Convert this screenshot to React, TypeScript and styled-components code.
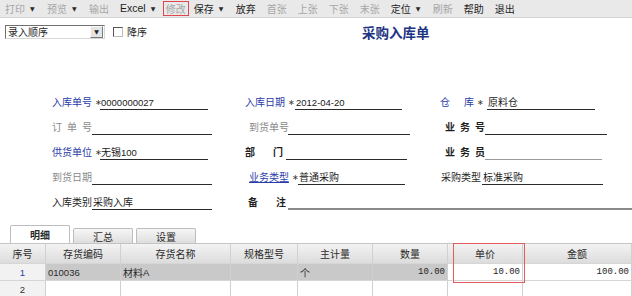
import styled, { createGlobalStyle } from "styled-components"

type Tone = "blue" | "gray" | "dark" | "link"

const toneColor: Record<Tone, string> = {
  blue: "#2a3ca8",
  link: "#2a3ca8",
  gray: "#8a8a8a",
  dark: "#1f1f1f",
}

const GlobalStyle = createGlobalStyle`
  html, body {
    margin: 0;
    padding: 0;
    background: #fff;
  }
  body {
    width: 632px;
    height: 296px;
    overflow: hidden;
    font-family: "Noto Sans CJK SC", "Liberation Sans", sans-serif;
    font-size: 10px;
    color: #1f1f1f;
  }
`

const Toolbar = styled.div`
  display: flex;
  align-items: center;
  height: 17px;
  background: #e9e9e9;
  border-bottom: 1px solid #d4d4d4;
`

const ToolButton = styled.div<{ $disabled?: boolean; $marked?: boolean }>`
  display: flex;
  align-items: center;
  height: 15px;
  box-sizing: border-box;
  padding: 0 ${(p) => (p.$marked ? 2 : 4)}px;
  margin-right: ${(p) => (p.$marked ? 0 : 1)}px;
  line-height: 13px;
  white-space: nowrap;
  color: ${(p) => (p.$disabled ? "#a6a6a6" : "#1e1e1e")};
  border: 1px solid ${(p) => (p.$marked ? "#e0474c" : "transparent")};
`

const Latin = styled.span`
  font-family: "Liberation Sans", sans-serif;
  font-size: 10.5px;
`

const Caret = styled.span`
  display: inline-block;
  width: 6px;
  margin-left: 5px;
  font-family: "DejaVu Sans", sans-serif;
  font-size: 6px;
  color: #2a2a2a;
`

const TopRow = styled.div`
  display: flex;
  align-items: center;
  height: 16px;
  margin: 6px 0 0 5px;
`

const Combo = styled.div`
  display: flex;
  align-items: center;
  width: 100px;
  height: 14px;
  box-sizing: border-box;
  padding-left: 2px;
  background: #fff;
  border: 1px solid;
  border-color: #707070 #d8d8d8 #d8d8d8 #707070;
  line-height: 12px;
`

const ComboButton = styled.span`
  display: flex;
  align-items: center;
  justify-content: center;
  width: 11px;
  height: 10px;
  margin-left: auto;
  margin-right: 1px;
  background: #e4e4e4;
  border: 1px solid;
  border-color: #fafafa #7a7a7a #7a7a7a #fafafa;
  font-family: "DejaVu Sans", sans-serif;
  font-size: 6px;
  color: #222;
`

const CheckBox = styled.span`
  width: 8px;
  height: 8px;
  margin-left: 8px;
  border: 1px solid #555;
  border-right-color: #bbb;
  border-bottom-color: #bbb;
  background: #fff;
`

const CheckLabel = styled.span`
  margin-left: 4px;
  line-height: 14px;
`

const Title = styled.div`
  margin-left: 215px;
  font-size: 13.5px;
  font-weight: bold;
  color: #1d3582;
  line-height: 16px;
`

const Form = styled.div`
  display: flex;
  flex-direction: column;
  margin-top: 45px;
`

const FormRow = styled.div`
  display: grid;
  grid-template-columns: 193px 195px 1fr;
  height: 25px;
  padding-left: 52px;
`

const Field = styled.div<{ $indent: number; $span?: boolean }>`
  display: flex;
  align-items: flex-end;
  margin-left: ${(p) => p.$indent}px;
  grid-column: ${(p) => (p.$span ? "span 2" : "auto")};
`

const LabelBox = styled.div<{ $width: number }>`
  display: flex;
  align-items: center;
  flex: none;
  width: ${(p) => p.$width}px;
  height: 14px;
  margin-bottom: 1px;
`

const LabelText = styled.span<{ $tone: Tone; $bold?: boolean; $width: number }>`
  display: flex;
  justify-content: space-between;
  width: ${(p) => p.$width}px;
  line-height: 14px;
  white-space: nowrap;
  color: ${(p) => toneColor[p.$tone]};
  font-weight: ${(p) => (p.$bold ? "bold" : "normal")};
  text-decoration: ${(p) => (p.$tone === "link" ? "underline" : "none")};
  text-underline-offset: 1px;
`

const Star = styled.span`
  margin-left: 3px;
  font-family: "DejaVu Sans", sans-serif;
  font-size: 8px;
  color: #333;
`

const Line = styled.div<{ $width?: number; $light?: boolean; $thick?: boolean }>`
  flex: ${(p) => (p.$width ? "none" : "1")};
  width: ${(p) => (p.$width ? `${p.$width}px` : "auto")};
  height: 15px;
  box-sizing: border-box;
  padding-left: 1px;
  line-height: 14px;
  white-space: nowrap;
  color: #1a1a1a;
  border-bottom: ${(p) => (p.$thick ? 2 : 1)}px solid
    ${(p) => (p.$light ? "#9a9a9a" : p.$thick ? "#8a8a8a" : "#2a2a2a")};
`

const Digits = styled.span`
  font-family: "Liberation Sans", sans-serif;
  font-size: 9.5px;
`

const Tabs = styled.div`
  display: flex;
  align-items: flex-end;
  gap: 3px;
  height: 18px;
  margin-top: 15px;
  padding-left: 10px;
`

const Tab = styled.div<{ $active?: boolean }>`
  display: flex;
  align-items: center;
  justify-content: center;
  width: 60px;
  height: ${(p) => (p.$active ? 18 : 15)}px;
  box-sizing: border-box;
  border: 1px solid #bdbdbd;
  border-bottom: none;
  border-radius: 2px 2px 0 0;
  background: ${(p) =>
    p.$active ? "#ffffff" : "linear-gradient(#f6f6f6, #dedede)"};
  font-weight: ${(p) => (p.$active ? "bold" : "normal")};
  color: #2a2a2a;
`

const Grid = styled.div`
  position: relative;
  border-top: 1px solid #c4c4c4;
`

const GridRow = styled.div<{ $height: number }>`
  display: grid;
  grid-template-columns: 46px 75px 110px 67px 75px 75px 75px 1fr;
  height: ${(p) => p.$height}px;
  border-bottom: 1px solid #d6d6d6;
`

type Shade = "head" | "index" | "gray" | "white"

const shadeBg: Record<Shade, string> = {
  head: "linear-gradient(#f3f3f3, #dcdcdc)",
  index: "#f2f2f2",
  gray: "#c9c9c9",
  white: "#ffffff",
}

const Cell = styled.div<{ $shade: Shade; $align?: "left" | "center" | "right" }>`
  display: flex;
  align-items: center;
  justify-content: ${(p) =>
    p.$align === "right" ? "flex-end" : p.$align === "center" ? "center" : "flex-start"};
  padding: 0 2px;
  background: ${(p) => shadeBg[p.$shade]};
  border-right: 1px solid #d0d0d0;
  white-space: nowrap;
  overflow: hidden;
  color: #2a2a2a;
`

const RowNo = styled.span<{ $blue?: boolean }>`
  font-family: "Liberation Sans", sans-serif;
  font-size: 9.5px;
  color: ${(p) => (p.$blue ? "#2a3ca8" : "#333")};
`

const Amount = styled.span`
  font-family: "Liberation Mono", monospace;
  font-size: 9px;
  color: #222;
`

const Mark = styled.div`
  position: absolute;
  left: 453px;
  top: -1px;
  width: 72px;
  height: 40px;
  box-sizing: border-box;
  border: 1.5px solid #e05a5e;
  pointer-events: none;
`

type Tool = { text: string; disabled?: boolean; caret?: boolean; marked?: boolean; latin?: boolean }

const tools: Tool[] = [
  { text: "打印", disabled: true, caret: true },
  { text: "预览", disabled: true, caret: true },
  { text: "输出", disabled: true },
  { text: "Excel", caret: true, latin: true },
  { text: "修改", disabled: true, marked: true },
  { text: "保存", caret: true },
  { text: "放弃" },
  { text: "首张", disabled: true },
  { text: "上张", disabled: true },
  { text: "下张", disabled: true },
  { text: "末张", disabled: true },
  { text: "定位", caret: true },
  { text: "刷新", disabled: true },
  { text: "帮助" },
  { text: "退出" },
]

type FieldDef = {
  label: string
  tone: Tone
  bold?: boolean
  required?: boolean
  value?: string
  indent?: number
  textW?: number
  labelW: number
  lineW?: number
  light?: boolean
  wide?: boolean
}

const rows: FieldDef[][] = [
  [
    { label: "入库单号", tone: "blue", required: true, value: "0000000027", labelW: 48, lineW: 108 },
    { label: "入库日期", tone: "blue", required: true, value: "2012-04-20", labelW: 50, lineW: 107 },
    { label: "仓库", tone: "blue", required: true, value: "原料仓", textW: 34, labelW: 47, lineW: 108 },
  ],
  [
    { label: "订单号", tone: "gray", labelW: 40, lineW: 120 },
    { label: "到货单号", tone: "gray", indent: 4, labelW: 39, lineW: 122 },
    { label: "业务号", tone: "dark", bold: true, indent: 5, labelW: 40, lineW: 122 },
  ],
  [
    { label: "供货单位", tone: "blue", required: true, value: "无锡100", labelW: 48, lineW: 108 },
    { label: "部门", tone: "dark", bold: true, textW: 38, labelW: 41, lineW: 121 },
    { label: "业务员", tone: "dark", bold: true, indent: 5, labelW: 40, lineW: 117, light: true },
  ],
  [
    { label: "到货日期", tone: "gray", labelW: 40, lineW: 120 },
    { label: "业务类型", tone: "link", required: true, value: "普通采购", indent: 4, labelW: 49, lineW: 107 },
    { label: "采购类型", tone: "dark", value: "标准采购", indent: 1, labelW: 41, lineW: 121 },
  ],
  [
    { label: "入库类别", tone: "dark", value: "采购入库", labelW: 40, lineW: 120 },
    { label: "备注", tone: "dark", bold: true, textW: 38, indent: 3, labelW: 40, wide: true },
  ],
]

function renderValue(v?: string) {
  if (!v) return null
  const parts = v.split(/([0-9-]+)/).filter(Boolean)
  return parts.map((p, i) => (/^[0-9-]+$/.test(p) ? <Digits key={i}>{p}</Digits> : <span key={i}>{p}</span>))
}

const heads = ["序号", "存货编码", "存货名称", "规格型号", "主计量", "数量", "单价", "金额"]

export default function App() {
  return (
    <>
      <GlobalStyle />
      <Toolbar>
        {tools.map((t) => (
          <ToolButton key={t.text} $disabled={t.disabled} $marked={t.marked}>
            {t.latin ? <Latin>{t.text}</Latin> : t.text}
            {t.caret && <Caret>▼</Caret>}
          </ToolButton>
        ))}
      </Toolbar>

      <TopRow>
        <Combo>
          录入顺序
          <ComboButton>▼</ComboButton>
        </Combo>
        <CheckBox />
        <CheckLabel>降序</CheckLabel>
        <Title>采购入库单</Title>
      </TopRow>

      <Form>
        {rows.map((row, ri) => (
          <FormRow key={ri}>
            {row.map((f) => (
              <Field key={f.label} $indent={f.indent ?? 0} $span={f.wide}>
                <LabelBox $width={f.labelW}>
                  <LabelText $tone={f.tone} $bold={f.bold} $width={f.textW ?? 40}>
                    {f.label.split("").map((c, i) => (
                      <span key={i}>{c}</span>
                    ))}
                  </LabelText>
                  {f.required && <Star>∗</Star>}
                </LabelBox>
                <Line $width={f.lineW} $light={f.light} $thick={f.wide}>
                  {renderValue(f.value)}
                </Line>
              </Field>
            ))}
          </FormRow>
        ))}
      </Form>

      <Tabs>
        <Tab $active>明细</Tab>
        <Tab>汇总</Tab>
        <Tab>设置</Tab>
      </Tabs>

      <Grid>
        <GridRow $height={19}>
          {heads.map((h) => (
            <Cell key={h} $shade="head" $align="center">
              {h}
            </Cell>
          ))}
        </GridRow>
        <GridRow $height={16}>
          <Cell $shade="index" $align="center">
            <RowNo $blue>1</RowNo>
          </Cell>
          <Cell $shade="gray">
            <Digits>010036</Digits>
          </Cell>
          <Cell $shade="gray">
            材料<Digits>A</Digits>
          </Cell>
          <Cell $shade="gray" />
          <Cell $shade="gray">个</Cell>
          <Cell $shade="gray" $align="right">
            <Amount>10.00</Amount>
          </Cell>
          <Cell $shade="white" $align="right">
            <Amount>10.00</Amount>
          </Cell>
          <Cell $shade="white" $align="right">
            <Amount>100.00</Amount>
          </Cell>
        </GridRow>
        <GridRow $height={16}>
          <Cell $shade="index" $align="center">
            <RowNo>2</RowNo>
          </Cell>
          {heads.slice(1).map((h) => (
            <Cell key={h} $shade="white" />
          ))}
        </GridRow>
        <Mark />
      </Grid>
    </>
  )
}
